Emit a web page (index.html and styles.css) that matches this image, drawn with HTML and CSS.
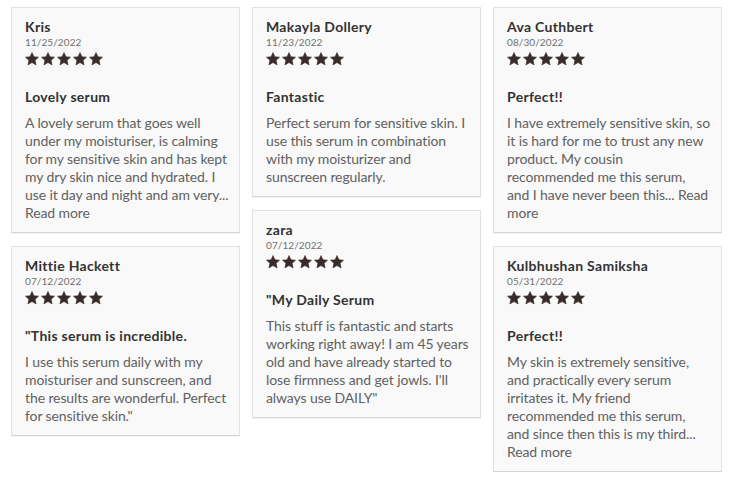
FILE: index.html
```html
<!DOCTYPE html>
<html lang="en">
<head>
<meta charset="utf-8">
<title>Reviews</title>
<link rel="stylesheet" href="styles.css">
</head>
<body>
<svg width="0" height="0" class="defs" aria-hidden="true">
  <defs>
    <symbol id="star" viewBox="0 0 24 24">
      <path d="M12 .9L15.29 8.1L23.2 8.9L17.33 14.23L19.05 22.2L12 18.1L4.95 22.2L6.67 14.23L.8 8.9L8.71 8.1Z"/>
    </symbol>
  </defs>
</svg>
<div class="reviews">
  <div class="col">
    <article class="card">
      <div class="name">Kris</div>
      <div class="date">11/25/2022</div>
      <div class="stars"><svg><use href="#star"/></svg><svg><use href="#star"/></svg><svg><use href="#star"/></svg><svg><use href="#star"/></svg><svg><use href="#star"/></svg></div>
      <h3 class="title">Lovely serum</h3>
      <p class="body">A lovely serum that goes well<br>under my moisturiser, is calming<br>for my sensitive skin and has kept<br>my dry skin nice and hydrated. I<br>use it day and night and am very...<br><span class="more">Read more</span></p>
    </article>
    <article class="card">
      <div class="name">Mittie Hackett</div>
      <div class="date">07/12/2022</div>
      <div class="stars"><svg><use href="#star"/></svg><svg><use href="#star"/></svg><svg><use href="#star"/></svg><svg><use href="#star"/></svg><svg><use href="#star"/></svg></div>
      <h3 class="title">"This serum is incredible.</h3>
      <p class="body">I use this serum daily with my<br>moisturiser and sunscreen, and<br>the results are wonderful. Perfect<br>for sensitive skin."</p>
    </article>
  </div>
  <div class="col">
    <article class="card">
      <div class="name">Makayla Dollery</div>
      <div class="date">11/23/2022</div>
      <div class="stars"><svg><use href="#star"/></svg><svg><use href="#star"/></svg><svg><use href="#star"/></svg><svg><use href="#star"/></svg><svg><use href="#star"/></svg></div>
      <h3 class="title">Fantastic</h3>
      <p class="body">Perfect serum for sensitive skin. I<br>use this serum in combination<br>with my moisturizer and<br>sunscreen regularly.</p>
    </article>
    <article class="card">
      <div class="name">zara</div>
      <div class="date">07/12/2022</div>
      <div class="stars"><svg><use href="#star"/></svg><svg><use href="#star"/></svg><svg><use href="#star"/></svg><svg><use href="#star"/></svg><svg><use href="#star"/></svg></div>
      <h3 class="title">"My Daily Serum</h3>
      <p class="body">This stuff is fantastic and starts<br>working right away! I am 45 years<br>old and have already started to<br>lose firmness and get jowls. I'll<br>always use DAILY"</p>
    </article>
  </div>
  <div class="col">
    <article class="card">
      <div class="name">Ava Cuthbert</div>
      <div class="date">08/30/2022</div>
      <div class="stars"><svg><use href="#star"/></svg><svg><use href="#star"/></svg><svg><use href="#star"/></svg><svg><use href="#star"/></svg><svg><use href="#star"/></svg></div>
      <h3 class="title">Perfect!!</h3>
      <p class="body">I have extremely sensitive skin, so<br>it is hard for me to trust any new<br>product. My cousin<br>recommended me this serum,<br>and I have never been this... <span class="more">Read</span><br><span class="more">more</span></p>
    </article>
    <article class="card">
      <div class="name">Kulbhushan Samiksha</div>
      <div class="date">05/31/2022</div>
      <div class="stars"><svg><use href="#star"/></svg><svg><use href="#star"/></svg><svg><use href="#star"/></svg><svg><use href="#star"/></svg><svg><use href="#star"/></svg></div>
      <h3 class="title">Perfect!!</h3>
      <p class="body">My skin is extremely sensitive,<br>and practically every serum<br>irritates it. My friend<br>recommended me this serum,<br>and since then this is my third...<br><span class="more">Read more</span></p>
    </article>
  </div>
</div>
</body>
</html>
```
FILE: styles.css
```css
html, body {
  margin: 0;
  padding: 0;
  background: #ffffff;
}
body {
  font-family: Lato, "Open Sans", "Liberation Sans", sans-serif;
  color: #333333;
}
.defs {
  position: absolute;
  width: 0;
  height: 0;
  overflow: hidden;
}
.reviews {
  display: grid;
  grid-template-columns: repeat(3, 229px);
  column-gap: 12px;
  align-items: start;
  padding: 7px 0 0 11px;
}
.col {
  display: flex;
  flex-direction: column;
  gap: 13px;
}
.card {
  background: #f9f9f9;
  border: 1px solid #e2e2e2;
  border-bottom-color: #d4d4d4;
  box-shadow: 0 1px 1px rgba(0, 0, 0, 0.04);
  padding: 10px 13px 10px 13px;
}
.name {
  font-size: 14px;
  font-weight: 700;
  line-height: 18px;
  color: #333333;
  letter-spacing: 0.3px;
}
.date {
  font-size: 10px;
  line-height: 13px;
  color: #707070;
  letter-spacing: 0.1px;
}
.stars {
  display: flex;
  gap: 2px;
  height: 20px;
  align-items: center;
  color: #372c29;
}
.stars svg {
  width: 14px;
  height: 14px;
  fill: currentColor;
  stroke: currentColor;
  stroke-width: 1;
  stroke-linejoin: round;
}
.title {
  margin: 19px 0 0 0;
  font-size: 14px;
  font-weight: 700;
  line-height: 18px;
  color: #333333;
  letter-spacing: 0.3px;
}
.body {
  margin: 8px 0 0 0;
  font-size: 14px;
  line-height: 18px;
  color: #616161;
  letter-spacing: -0.1px;
  white-space: nowrap;
}
.more {
  color: #616161;
}
```
